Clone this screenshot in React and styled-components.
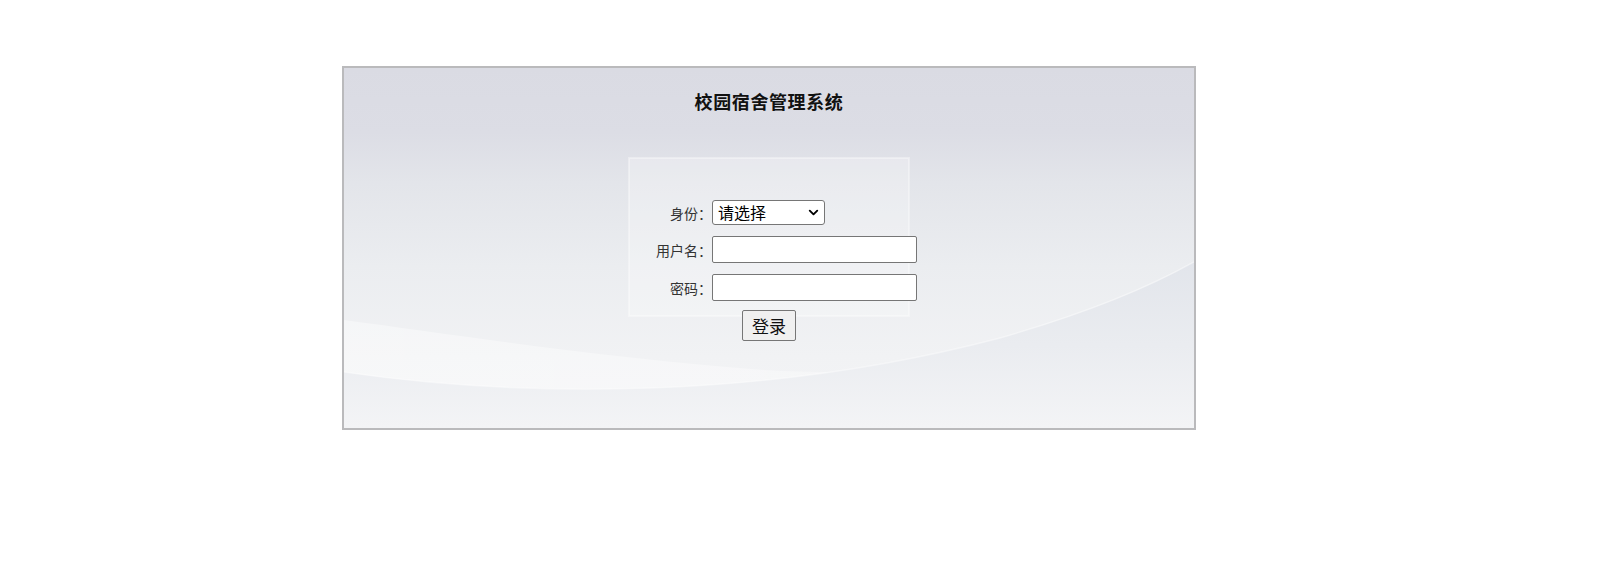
import React from "react";
import styled, { createGlobalStyle } from "styled-components";
import { ChevronDown } from "lucide-react";

const Global = createGlobalStyle`
  html, body { margin: 0; padding: 0; background: #ffffff; }
  body { font-family: "Noto Sans CJK SC", "Noto Sans", sans-serif; }
`;

const Page = styled.div`
  padding: 66px 0 0 342px;
`;

const Frame = styled.div`
  position: relative;
  width: 850px;
  height: 360px;
  border: 2px solid #bababc;
  background: #e6e8ec;
  overflow: hidden;
`;

const Backdrop = styled.svg`
  position: absolute;
  left: 0;
  top: 0;
  width: 850px;
  height: 360px;
`;

const Content = styled.div`
  position: relative;
  display: flex;
  flex-direction: column;
  align-items: center;
  height: 100%;
`;

const Title = styled.h1`
  margin: 21px 0 0;
  font-size: 18px;
  line-height: 24px;
  font-weight: 700;
  color: #111;
  letter-spacing: 0.6px;
`;

const Form = styled.form`
  align-self: flex-start;
  margin: 87px 0 0 290px;
  display: flex;
  flex-direction: column;
  gap: 11px;
`;

const Row = styled.div`
  display: grid;
  grid-template-columns: 78px auto;
  column-gap: 0;
  align-items: center;
  height: ${(p) => p.$h}px;
`;

const Label = styled.label`
  text-align: right;
  font-size: 14px;
  color: #333;
  white-space: nowrap;
`;

const SelectWrap = styled.div`
  position: relative;
  width: 113px;
  height: 25px;
`;

const Select = styled.select`
  appearance: none;
  -webkit-appearance: none;
  box-sizing: border-box;
  width: 113px;
  height: 25px;
  font-size: 16px;
  line-height: 23px;
  font-family: "Noto Sans CJK SC", sans-serif;
  color: #000;
  background: #fff;
  border: 1px solid #767676;
  border-radius: 3px;
  padding: 0 0 0 5px;
`;

const Caret = styled(ChevronDown)`
  position: absolute;
  right: 4px;
  top: 5px;
  pointer-events: none;
  color: #000;
`;

const Input = styled.input`
  box-sizing: border-box;
  width: 205px;
  height: 27px;
  border: 1px solid #767676;
  border-radius: 2px;
  background: #fff;
  font-size: 14px;
`;

const Button = styled.button`
  align-self: center;
  margin-top: 9px;
  width: 54px;
  height: 31px;
  padding: 0;
  font-size: 17px;
  font-family: "Noto Sans CJK SC", sans-serif;
  color: #111;
  background: #f0f0f0;
  border: 1px solid #767676;
  border-radius: 2px;
`;

function Background() {
  return (
    <Backdrop viewBox="0 0 850 360" preserveAspectRatio="none">
      <defs>
        <linearGradient id="base" x1="0" y1="0" x2="0" y2="1">
          <stop offset="0" stopColor="#dadbe3" />
          <stop offset="0.18" stopColor="#dcdde5" />
          <stop offset="0.32" stopColor="#e3e5ea" />
          <stop offset="0.55" stopColor="#ebedf0" />
          <stop offset="0.8" stopColor="#f1f2f4" />
          <stop offset="1" stopColor="#f4f5f6" />
        </linearGradient>
        <linearGradient id="low" x1="0" y1="0" x2="0" y2="1">
          <stop offset="0" stopColor="#e2e5eb" />
          <stop offset="0.5" stopColor="#eaecf0" />
          <stop offset="1" stopColor="#f3f4f6" />
        </linearGradient>
        <linearGradient id="band" x1="0" y1="0" x2="1" y2="0">
          <stop offset="0" stopColor="#ffffff" stopOpacity="0.4" />
          <stop offset="0.6" stopColor="#ffffff" stopOpacity="0.35" />
          <stop offset="1" stopColor="#ffffff" stopOpacity="0" />
        </linearGradient>
      </defs>
      <rect x="0" y="0" width="850" height="360" fill="url(#base)" />
      <path
        d="M0,252 C120,268 260,290 420,302 C520,308 600,300 700,290 L700,330 L0,330 Z"
        fill="url(#band)"
      />
      <path
        d="M0,304 C180,330 420,332 656,270 C740,246 800,222 850,194 L850,360 L0,360 Z"
        fill="url(#low)"
      />
      <path
        d="M0,304 C180,330 420,332 656,270 C740,246 800,222 850,194"
        fill="none"
        stroke="#ffffff"
        strokeOpacity="0.4"
        strokeWidth="1.5"
      />
      <rect
        x="285"
        y="90"
        width="280"
        height="158"
        fill="#ffffff"
        fillOpacity="0.25"
        stroke="#ffffff"
        strokeOpacity="0.35"
        strokeWidth="2"
      />
    </Backdrop>
  );
}

export default function App() {
  return (
    <>
      <Global />
      <Page>
        <Frame>
          <Background />
          <Content>
            <Title>校园宿舍管理系统</Title>
            <Form onSubmit={(e) => e.preventDefault()}>
              <Row $h={25}>
                <Label>身份：</Label>
                <SelectWrap>
                  <Select defaultValue="">
                    <option value="">请选择</option>
                    <option value="student">学生</option>
                    <option value="admin">宿舍管理员</option>
                    <option value="sys">系统管理员</option>
                  </Select>
                  <Caret size={15} strokeWidth={3} />
                </SelectWrap>
              </Row>
              <Row $h={27}>
                <Label>用户名：</Label>
                <Input type="text" />
              </Row>
              <Row $h={27}>
                <Label>密码：</Label>
                <Input type="password" />
              </Row>
            </Form>
            <Button type="button">登录</Button>
          </Content>
        </Frame>
      </Page>
    </>
  );
}
